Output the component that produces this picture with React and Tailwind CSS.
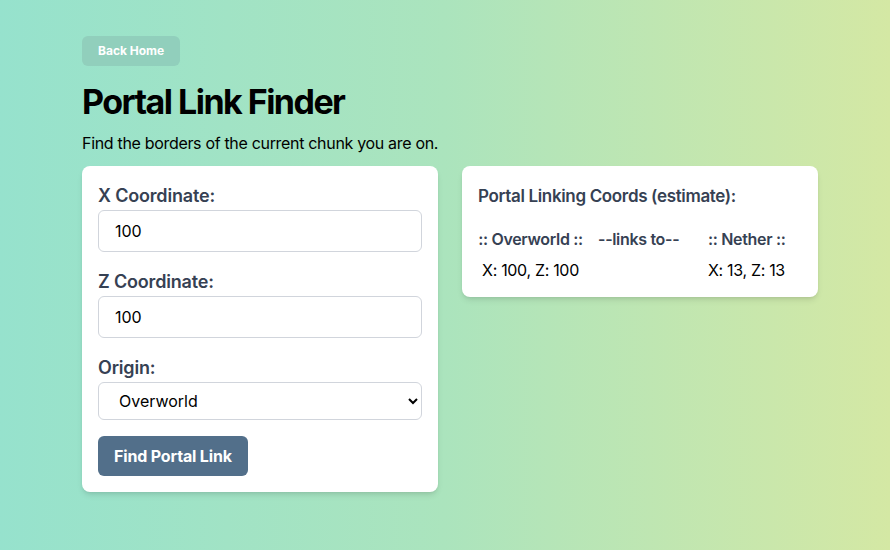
const inputClass =
  "block w-full h-[42px] rounded-md border border-gray-300 bg-white px-4 text-base text-black outline-none";

const labelClass = "block text-lg font-semibold leading-7 tracking-[-0.01em] text-gray-700";

export default function App() {
  return (
    <div
      className="min-h-[550px] w-full bg-gradient-to-r from-[#96e2cd] via-[#abe4bd] to-[#d4e8a4] pt-9 pl-[82px]"
      style={{ fontFamily: "Inter, 'Liberation Sans', sans-serif" }}
    >
      <div className="w-[736px]">
        <button className="h-[30px] rounded-md bg-[#91cfbc] px-4 text-xs font-bold text-white">
          Back Home
        </button>
        <h1 className="mt-4 text-[34px] font-bold leading-10 tracking-[-0.045em] text-black">
          Portal Link Finder
        </h1>
        <p className="mt-[9px] text-base leading-6 tracking-[-0.02em] text-black">
          Find the borders of the current chunk you are on.
        </p>

        <div className="mt-[11px] flex items-start gap-6">
          <div className="w-[356px] rounded-lg bg-white p-4 shadow-md">
            <div className="mb-4">
              <label className={labelClass}>X Coordinate:</label>
              <input className={inputClass} defaultValue="100" />
            </div>
            <div className="mb-4">
              <label className={labelClass}>Z Coordinate:</label>
              <input className={inputClass} defaultValue="100" />
            </div>
            <div className="mb-4">
              <label className={labelClass}>Origin:</label>
              <select className="block h-[38px] w-full rounded-md border border-gray-300 bg-white px-4 text-base text-black">
                <option>Overworld</option>
                <option>Nether</option>
              </select>
            </div>
            <button className="h-10 rounded-md bg-[#526f8a] px-4 text-base font-bold tracking-[-0.01em] text-white">
              Find Portal Link
            </button>
          </div>

          <div className="w-[356px] rounded-lg bg-white px-4 pt-4 pb-[15px] shadow-md">
            <h2 className="text-[17px] font-semibold leading-7 tracking-[-0.02em] text-gray-700">
              Portal Linking Coords (estimate):
            </h2>
            <div className="mt-[17px] grid grid-cols-[105px_95px_auto] gap-x-[15px] whitespace-nowrap text-base tracking-[-0.02em]">
              <div className="pb-[7px] text-center font-semibold text-gray-700">:: Overworld ::</div>
              <div className="pb-[7px] font-semibold text-gray-700">--links to--</div>
              <div className="pb-[7px] font-semibold text-gray-700">:: Nether ::</div>
              <div className="text-center text-black">X: 100, Z: 100</div>
              <div></div>
              <div className="text-black">X: 13, Z: 13</div>
            </div>
          </div>
        </div>
      </div>
    </div>
  );
}
